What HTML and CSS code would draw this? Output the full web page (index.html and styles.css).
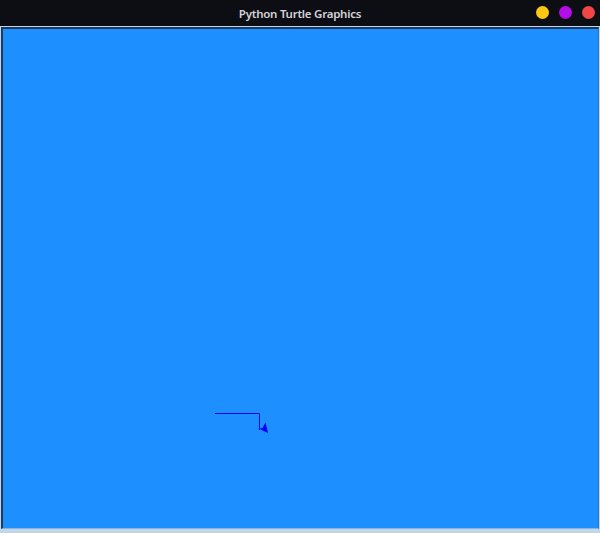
FILE: index.html
```html
<!DOCTYPE html>
<html>
<head>
<meta charset="utf-8">
<link rel="stylesheet" href="styles.css">
</head>
<body>
<div class="window">
  <div class="titlebar">
    <span class="title">Python Turtle Graphics</span>
    <div class="controls">
      <span class="dot yellow"></span>
      <span class="dot purple"></span>
      <span class="dot red"></span>
    </div>
  </div>
  <div class="frame">
    <div class="canvas">
      <svg class="drawing" width="594" height="499" viewBox="0 0 594 499">
        <polyline points="212,384.5 256.5,384.5 256.5,401" fill="none" stroke="#0000ff" stroke-width="1"/>
        <polygon points="265,404 255.5,399.5 259.5,399 262.5,393.5" fill="#0000ff"/>
      </svg>
    </div>
  </div>
</div>
</body>
</html>
```
FILE: styles.css
```css
html, body {
  margin: 0;
  padding: 0;
  background: #0d0d14;
}
.window {
  width: 600px;
  height: 533px;
  display: flex;
  flex-direction: column;
  overflow: hidden;
}
.titlebar {
  height: 26px;
  flex: none;
  background: #0d0d14;
  position: relative;
  display: flex;
  align-items: center;
  justify-content: center;
}
.title {
  font-family: "Noto Sans", sans-serif;
  font-weight: 600;
  font-size: 11.5px;
  color: #d4d4d8;
  letter-spacing: -0.25px;
}
.controls {
  position: absolute;
  right: 5px;
  top: 6px;
  display: flex;
  gap: 10px;
}
.dot {
  width: 13px;
  height: 13px;
  border-radius: 50%;
}
.yellow { background: #fcc814; }
.purple { background: #b40ee8; }
.red { background: #f04646; }
.frame {
  flex: 1;
  background: #c8d4e0;
  padding: 1px 1px 4px 1px;
  display: flex;
}
.canvas {
  flex: 1;
  background: #1e8fff;
  border-top: 2px solid #1a3a66;
  border-left: 2px solid #1a3a66;
  border-right: 1px solid #3070c0;
  border-bottom: 1px solid #7ab8f0;
  position: relative;
}
.drawing {
  display: block;
}
```
